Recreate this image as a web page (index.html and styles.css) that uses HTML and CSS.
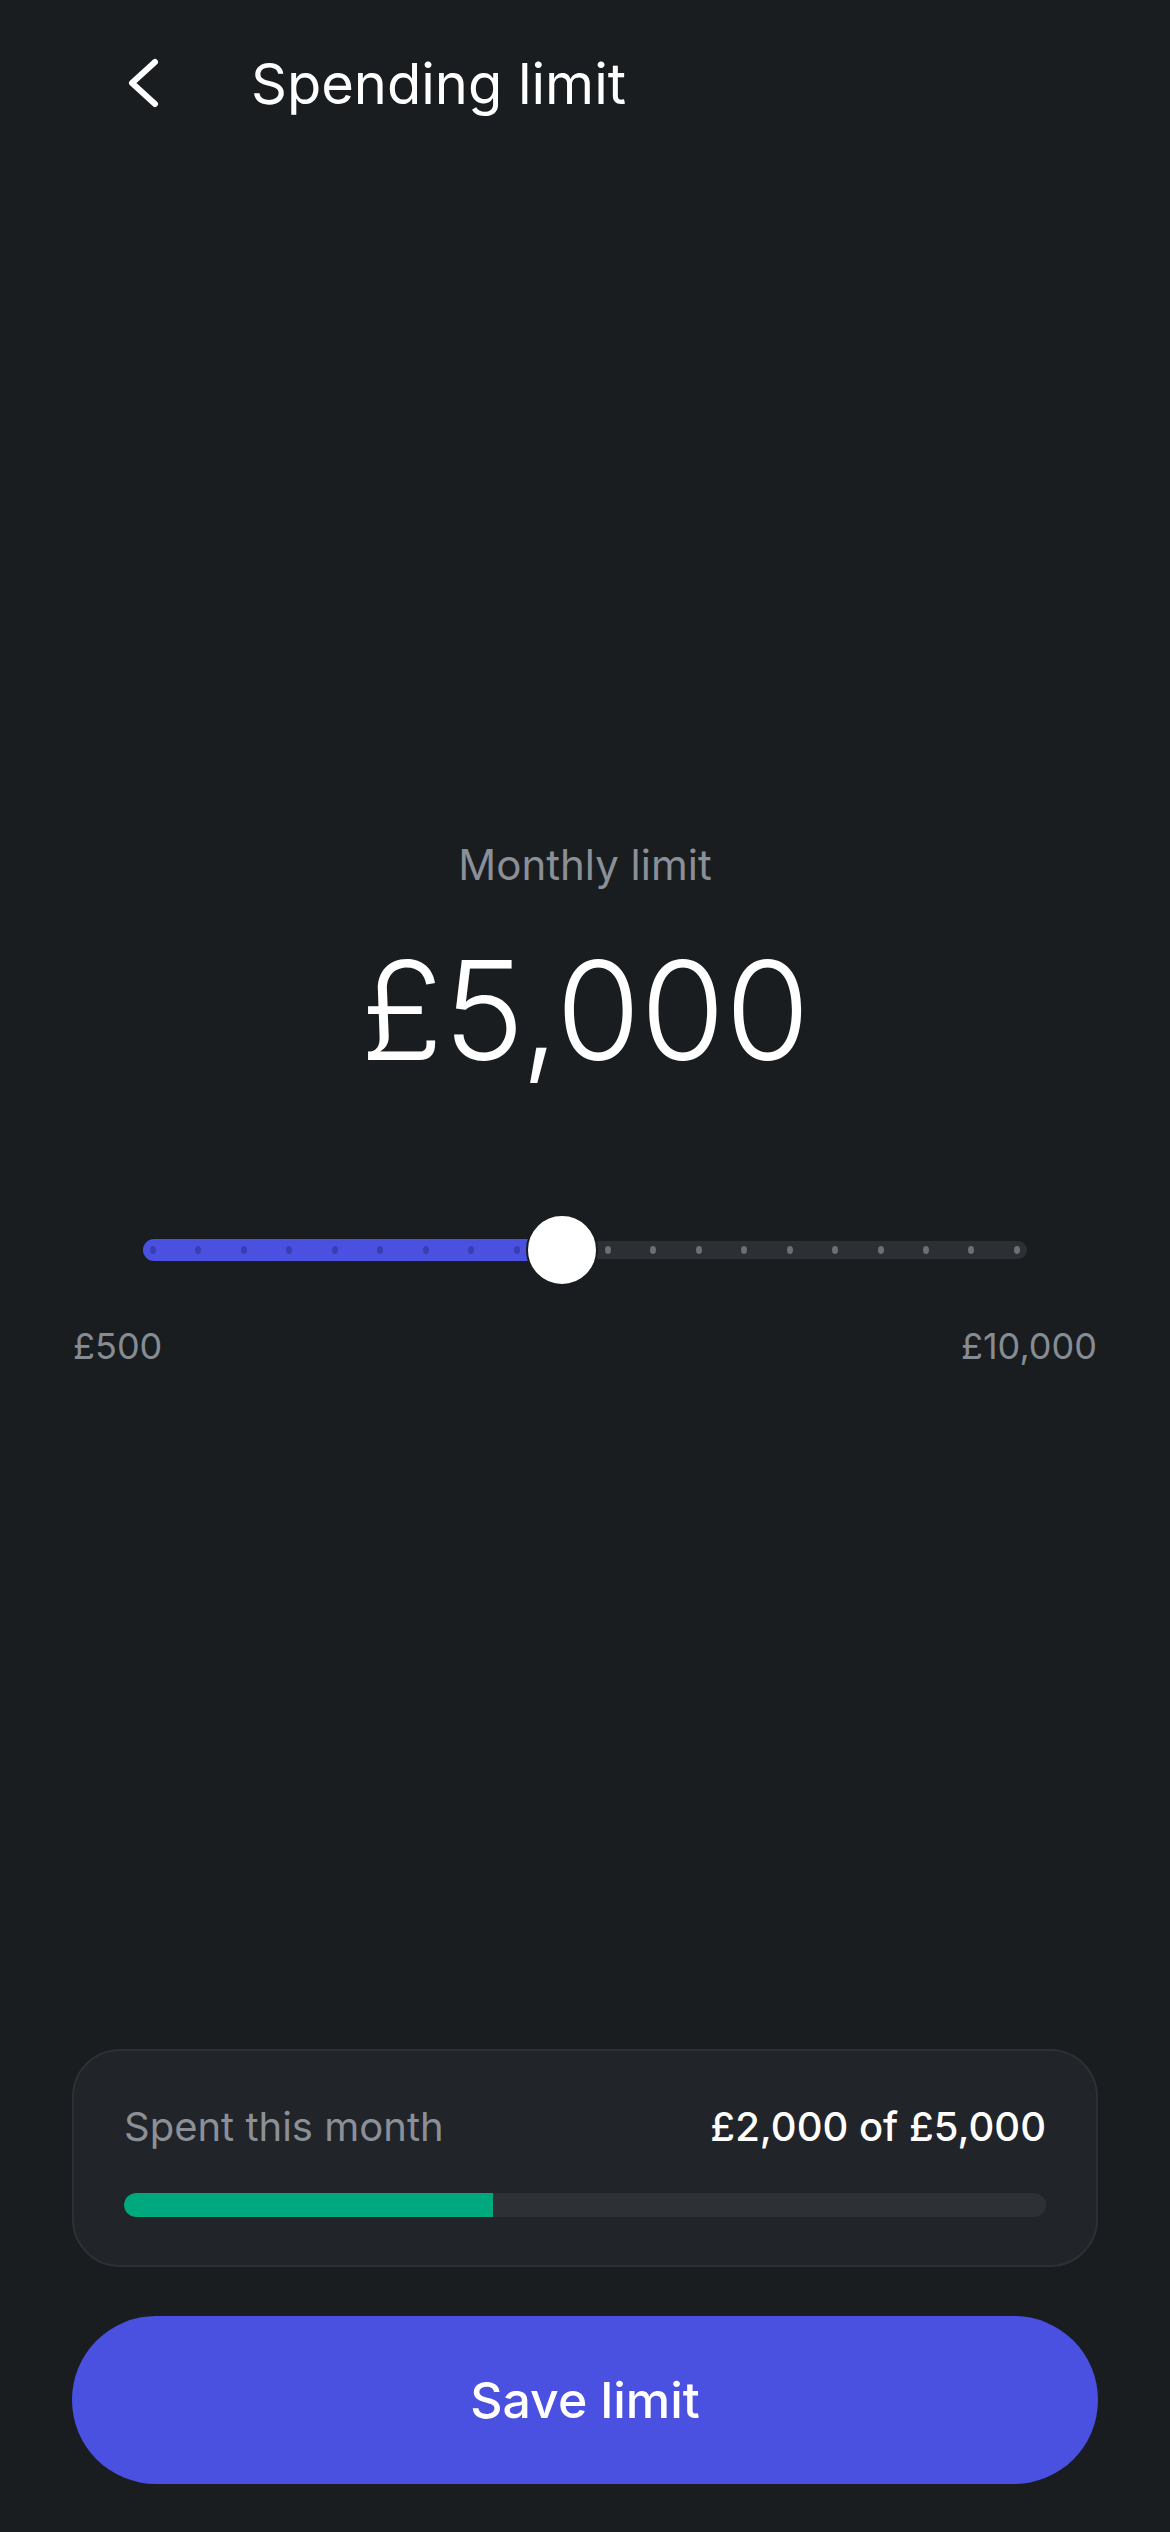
FILE: index.html
```html
<!DOCTYPE html>
<html lang="en">
<head>
  <meta charset="UTF-8" />
  <meta name="viewport" content="width=device-width, initial-scale=1.0" />
  <title>Spending limit</title>
  <link rel="stylesheet" href="styles.css">
</head>
<body>
  <div class="screen">
    <header class="top-bar">
      <button class="back-btn" aria-label="Back">
        <svg width="36" height="54" viewBox="0 0 36 54" fill="none">
          <path d="M30 5 L7 26 L30 47" stroke="#ffffff" stroke-width="6" stroke-linecap="round" stroke-linejoin="round" />
        </svg>
      </button>
      <h1>Spending limit</h1>
    </header>

    <main class="limit">
      <div class="limit-label">Monthly limit</div>
      <div class="limit-amount">£5,000</div>

      <div class="slider">
        <div class="track">
          <div class="fill" style="width: 47.45%"></div>
          <div class="dots">
            <span class="on"></span><span class="on"></span><span class="on"></span><span class="on"></span><span class="on"></span>
            <span class="on"></span><span class="on"></span><span class="on"></span><span class="on"></span><span class="on"></span>
            <span></span><span></span><span></span><span></span><span></span>
            <span></span><span></span><span></span><span></span><span></span>
          </div>
        </div>
        <div class="thumb" style="left: 47.45%"></div>
      </div>

      <div class="range-labels">
        <span>£500</span>
        <span>£10,000</span>
      </div>
    </main>

    <footer class="bottom">
      <div class="spent-card">
        <div class="spent-row">
          <span class="spent-label">Spent this month</span>
          <span class="spent-value">£2,000 of £5,000</span>
        </div>
        <div class="spent-bar">
          <div class="spent-fill" style="width: 40%"></div>
        </div>
      </div>
      <button class="save-btn">Save limit</button>
    </footer>
  </div>
</body>
</html>
```

FILE: styles.css
```css
* {
  margin: 0;
  padding: 0;
  box-sizing: border-box;
}
body {
  background: #1a1d20;
  font-family: Inter, "Noto Sans", Arial, sans-serif;
  color: #ffffff;
}
.screen {
  min-height: 2532px;
  display: flex;
  flex-direction: column;
}
.top-bar {
  height: 168px;
  display: flex;
  align-items: center;
  padding: 0 0 0 125px;
}
.back-btn {
  background: none;
  border: none;
  width: 36px;
  height: 54px;
  display: flex;
  cursor: pointer;
}
.top-bar h1 {
  font-size: 56px;
  font-weight: 400;
  margin-left: 90px;
}
.limit {
  flex: 1;
  display: flex;
  flex-direction: column;
  align-items: center;
  justify-content: center;
  padding-bottom: 10px;
}
.limit-label {
  font-size: 42px;
  color: #8b9098;
}
.limit-amount {
  font-size: 137px;
  font-weight: 300;
  line-height: 1.2;
  margin-top: 38px;
}
.slider {
  position: relative;
  align-self: stretch;
  margin: 122px 143px 0;
  height: 72px;
  display: flex;
  align-items: center;
}
.track {
  position: relative;
  width: 100%;
  height: 18px;
  border-radius: 9px;
  background: #2c3034;
}
.fill {
  position: absolute;
  left: 0;
  top: -2px;
  height: 22px;
  border-radius: 11px 0 0 11px;
  background: #4a50e0;
}
.dots {
  position: absolute;
  inset: 0;
  display: flex;
  align-items: center;
  justify-content: space-between;
  padding: 0 7px;
}
.dots span {
  width: 6px;
  height: 8px;
  border-radius: 50%;
  background: #6b6f76;
}
.dots span.on {
  background: #383eb4;
}
.thumb {
  position: absolute;
  top: 0;
  width: 72px;
  height: 72px;
  margin-left: -36px;
  border-radius: 50%;
  background: #ffffff;
  border: 2px solid #1a1d20;
}
.range-labels {
  align-self: stretch;
  display: flex;
  justify-content: space-between;
  margin: 38px 73px 0;
  font-size: 36px;
  color: #868c94;
}
.bottom {
  padding: 0 72px 48px;
  display: flex;
  flex-direction: column;
  gap: 49px;
}
.spent-card {
  background: #212428;
  border: 2px solid #2d3135;
  border-radius: 48px;
  padding: 52px 50px 48px;
}
.spent-row {
  display: flex;
  justify-content: space-between;
  font-size: 40px;
  line-height: 48px;
}
.spent-label {
  color: #8b9098;
}
.spent-value {
  color: #ffffff;
  font-weight: 500;
}
.spent-bar {
  margin-top: 42px;
  height: 24px;
  border-radius: 12px;
  background: #2d3135;
  overflow: hidden;
}
.spent-fill {
  height: 100%;
  background: #00a87e;
  border-radius: 12px 0 0 12px;
}
.save-btn {
  height: 168px;
  border: none;
  border-radius: 84px;
  background: #4a50df;
  color: #ffffff;
  font-family: inherit;
  font-size: 50px;
  font-weight: 500;
  cursor: pointer;
}
```
